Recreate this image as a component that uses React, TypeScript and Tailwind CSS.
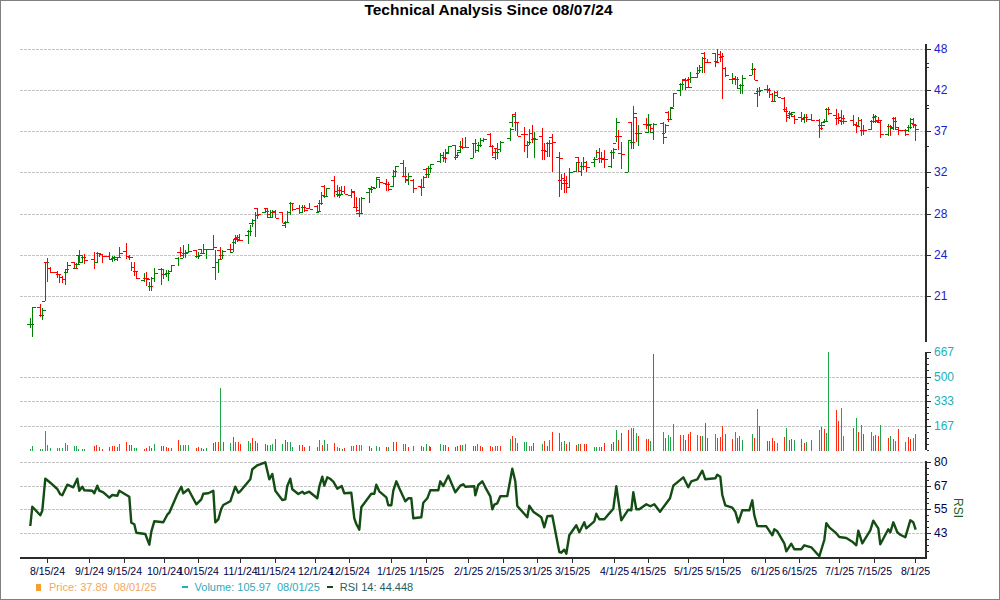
const A: number[][] = [
  [91,355,385,373,373],[97,320,412,373,321],
  [121,313,350,322,346],[127,325,361,346,330],[136,185,303,303,187],[142,175,245,187,205],[151,202,218,205,215],
  [172,212,235,215,221],[178,221,250,221,232],[187,228,250,232,236],[196,207,254,236,208],[202,187,218,215,195],
  [223,187,205,187,203],[229,190,205,203,192],[235,165,192,192,166],[238,150,190,166,187],[247,165,190,187,170],[253,163,193,170,181],
  [283,157,206,178,187],[292,157,185,187,158],[298,158,170,158,162],[307,162,188,162,169],
  [328,155,178,169,178],[337,168,185,178,170],[343,168,183,174,172],[352,170,182,178,170],[358,142,175,172,160],
  [379,130,178,152,168],[388,165,180,168,170],[394,187,214,170,202],[403,187,228,202,214],[409,212,236,214,233],
  [433,220,245,241,235],[439,217,258,235,236],[448,245,272,235,258],[454,230,272,258,235],[463,205,245,235,218],
  [484,205,254,206,222],[490,208,238,207,223],[499,210,232,223,218],[505,210,242,218,212],[514,195,215,212,196],
  [535,170,197,175,155],[541,140,170,155,165],[550,135,175,173,160],[556,150,175,160,155],[565,133,160,158,152],
  [589,150,175,150,168],[595,155,178,168,165],[604,148,163,148,160],[610,133,162,160,148],[619,148,177,148,147],
  [640,105,150,146,142],[646,150,240,200,187],[655,176,218,187,176],[661,142,180,150,165],[667,150,178,165,153],
  [691,133,160,146,147],[700,118,155,155,118],[706,105,133,127,112],[712,105,125,113,120],[718,103,123,118,120],
  [745,90,132,105,93],[751,75,108,93,70],[757,58,80,70,60],[766,35,110,60,45],[772,25,58,25,43],
  [796,28,40,35,34],[802,25,50,25,42],[811,30,55,50,35],[817,30,55,50,32],[826,30,55,37,55],
  [847,37,70,37,68],[856,62,85,75,65],[862,33,65,65,35],[871,7,45,35,10],[877,8,32,10,28],
  [898,14,42,25,37],[907,15,40,37,22],[913,15,35,20,30],[928,8,28,25,27],
  [952,15,35,17,33],[958,0,35,35,10],[965,-24,15,10,-15],[973,-45,-6,-42,-12],[980,-36,-9,-12,-36],
];
const B: number[][] = [
  [13,228,292,240,272],[22,255,290,272,285],[28,260,293,282,281],[34,258,285,271,272],[43,258,283,272,283],
  [64,268,295,285,272],[73,272,325,275,320],[79,290,335,320,330],[88,295,350,340,339],[94,290,343,340,295],
  [118,265,308,275,268],[124,258,278,265,262],[139,232,265,265,232],[148,236,265,238,245],
  [169,238,272,250,251],[175,245,272,252,268],[190,210,260,258,212],[196,198,230,228,198],
  [220,180,228,190,228],[226,200,250,228,240],[235,220,255,237,228],[250,238,278,240,265],
  [274,238,288,258,262],[280,228,262,262,230],[289,205,235,207,222],[295,198,235,222,205],[301,192,218,205,192],
  [331,160,188,182,165],[340,155,187,165,175],[346,148,188,170,155],[355,137,162,160,138],
  [376,135,180,136,165],[382,155,175,172,155],[391,123,158,150,140],[397,113,148,137,140],[406,112,145,140,142],
  [430,130,175,175,130],[436,118,158,130,150],[445,125,155,150,135],[451,113,140,135,120],[460,113,125,120,117],
  [481,100,140,102,137],[487,135,168,137,157],[496,148,180,172,155],[502,130,178,143,148],[511,122,155,148,127],
  [541,85,122,113,87],[547,42,80,65,48],[556,37,92,42,67],[562,65,108,67,108],
  [583,80,155,102,103],[592,122,175,135,125],[598,88,135,135,100],[607,75,130,100,115],[613,95,175,118,117],
  [637,85,180,108,150],[643,130,180,150,152],[652,125,170,152,130],[658,120,172,130,128],[667,103,215,110,127],
  [688,155,290,172,173],[694,222,270,240,250],[703,220,278,235,250],[709,228,278,240,262],[718,205,265,262,217],
  [739,185,215,213,187],[745,170,215,170,213],[754,185,228,213,197],[760,170,210,197,185],[769,183,215,197,202],
  [793,172,200,185,178],[799,150,175,178,155],[808,145,190,155,175],[814,155,190,175,176],[823,150,203,175,176],
  [844,150,205,197,155],[850,143,178,155,148],[859,55,125,128,67],[865,90,150,107,108],[874,127,207,160,162],
  [895,120,215,215,120],[904,67,148,67,125],[910,18,148,125,40],[919,50,125,52,100],[925,75,137,100,99],
  [949,55,88,72,73],[955,42,100,97,72],[961,75,97,75,85],[970,70,120,97,72],
];
// bars between the two traced crops, given in page pixels
const G: number[][] = [
  [663.3,121.7,144,123,137],[665.3,124,133,133,125],[668.3,111,122,112,119],[670.3,107,119,119,108],[673.3,93,107,107,93],
];
const C: number[][] = [
  [32,160,197,180,162],[38,148,180,162,148],[46,145,180,150,172],[55,140,172,150,172],[61,125,158,148,140],
  [82,110,143,140,120],[88,105,130,130,110],[97,80,130,110,83],[103,67,128,68,97],[112,88,100,95,96],
  [136,68,110,70,95],[142,57,95,93,72],[151,62,97,72,77],[157,68,208,80,113],[166,112,140,113,135],
  [187,130,162,147,146],[196,137,165,143,147],[202,140,178,147,175],[211,163,192,175,165],[217,135,193,165,145],
  [247,100,135,135,118],[253,115,150,118,150],[262,175,230,190,182],[268,172,197,182,180],
  [292,165,188,178,180],[298,175,205,178,192],[307,190,215,192,212],[313,183,215,212,195],[322,183,200,185,200],
  [343,200,245,203,243],[349,230,277,237,260],[358,242,268,255,252],[364,245,262,250,247],[373,255,282,257,267],
  [394,245,275,262,265],[403,252,278,267,262],[409,253,275,260,268],[424,253,273,268,269],
  [448,267,323,270,295],[454,280,300,285,286],[463,268,280,277,272],[469,235,275,272,238],[475,232,255,238,250],
  [499,238,285,255,265],[505,250,283,265,270],[514,240,285,260,265],[520,255,283,272,273],
  [550,255,288,270,282],[559,275,308,282,288],[565,262,288,285,270],[574,268,318,270,300],[580,285,315,300,301],
  [604,270,300,298,272],[610,252,280,272,258],[616,255,280,262,272],[625,262,280,270,271],[631,270,323,275,313],
  [655,283,318,313,288],[661,285,318,288,292],[670,262,300,295,273],[676,262,297,265,292],[685,295,315,298,300],
  [706,298,317,300,313],[715,285,305,300,292],[721,265,297,290,268],[730,265,295,280,285],[736,282,332,283,298],
];
const bars: number[][] = [
  ...A.map((b) => [Math.floor(b[0] / 3), 200 + b[1] / 3, 200 + b[2] / 3, 200 + b[3] / 3, 200 + b[4] / 3]),
  ...B.map((b) => [330 + Math.floor(b[0] / 3), 100 + b[1] / 3, 100 + b[2] / 3, 100 + b[3] / 3, 100 + b[4] / 3]),
  ...G.map((b) => [Math.floor(b[0]), b[1], b[2], b[3], b[4]]),
  ...C.map((b) => [670 + Math.floor(b[0] / 3), 30 + b[1] / 3, 30 + b[2] / 3, 30 + b[3] / 3, 30 + b[4] / 3]),
];

// [x in crop, bar top in crop, 1 = green]
const VA: number[][] = [
  [91,147,1],[97,138,1],[121,147,1],[127,147,1],[136,93,1],[142,136,1],[151,144,1],[172,144,1],[178,144,1],[187,143,1],[196,130,1],[202,136,1],
  [223,138,1],[229,138,1],[235,147,1],[247,148,1],[253,148,1],[283,138,0],[289,136,0],[298,142,0],[307,147,0],[328,140,0],[337,139,0],[343,139,0],[352,142,0],[358,133,1],
  [379,126,0],[388,134,0],[394,135,0],[403,144,1],[409,144,1],[433,147,0],[439,144,0],[448,138,1],[454,143,0],[463,133,1],[484,139,0],[490,139,0],[499,142,0],[505,144,0],[514,145,0],
  [535,120,0],[541,134,1],[550,135,1],[556,135,1],[565,135,1],[589,144,0],[595,142,0],[604,144,0],[610,146,0],[619,145,1],[640,129,0],[646,127,0],[655,127,0],[661,-36,1],[670,127,0],
  [691,130,1],[700,112,0],[706,127,1],[715,127,0],[721,132,0],[745,124,1],[751,130,1],[757,115,0],[766,124,0],[772,130,0],[796,131,0],[802,134,0],[811,135,1],[817,133,1],[826,118,0],
  [847,133,1],[856,121,0],[862,127,1],[871,127,1],[877,142,1],[898,136,0],[907,136,0],[913,142,0],[928,139,0],[952,142,0],[958,121,1],[967,135,0],[973,120,1],[982,133,1],
];
const VB: number[][] = [
  [13,130,0],[22,140,1],[28,145,0],[37,146,1],[43,145,0],[64,139,1],[70,139,1],[79,135,0],[88,135,1],[94,135,1],[118,139,0],[124,144,0],[139,139,1],[148,142,1],
  [169,142,0],[175,142,1],[190,125,0],[199,125,0],[220,133,1],[226,133,0],[235,142,0],[250,139,1],[274,139,0],[280,142,1],[289,133,1],[298,139,0],[301,142,0],
  [331,133,1],[340,134,1],[346,136,0],[355,140,0],[376,140,0],[382,139,0],[391,136,0],[397,136,1],[406,133,1],[430,139,0],[436,137,0],[442,133,1],[451,139,0],[457,142,0],
  [481,139,0],[487,142,0],[496,139,1],[502,138,1],[511,138,0],[541,118,1],[547,108,0],[556,115,1],[562,130,0],[583,126,1],[589,126,1],[598,138,1],[604,138,1],[610,130,0],
  [637,133,1],[643,122,0],[652,138,0],[658,120,1],[667,96,0],[688,98,0],[694,126,1],[703,124,1],[709,133,0],[718,126,0],[739,136,0],[745,133,1],[751,133,0],[763,132,0],[769,132,0],
  [793,141,1],[799,140,1],[808,140,1],[814,140,0],[823,129,0],[844,131,0],[850,126,0],[859,90,1],[865,120,0],[874,98,0],[895,90,0],[904,85,1],[910,85,0],[919,99,1],[925,109,0],
  [949,117,0],[955,118,0],[961,124,1],[970,-138,0],[1000,97,1],[1006,115,0],[1015,106,1],[1021,112,1],[1030,72,1],
];
const VC: number[][] = [
  [30,105,0],[39,105,1],[45,120,0],[55,102,0],[61,97,0],[82,105,1],[91,108,0],[97,108,1],[106,69,0],[112,115,0],[136,102,1],[142,114,0],[151,111,0],[157,78,0],[166,102,0],
  [187,118,0],[196,97,1],[202,114,0],[208,108,0],[217,120,1],[247,102,1],[253,115,0],[262,27,1],[268,78,0],[292,123,0],[298,123,0],[307,115,0],[313,123,0],[322,129,1],
  [343,111,0],[349,84,1],[358,120,0],[364,117,0],[373,120,1],[394,117,0],[403,129,0],[409,126,1],[424,120,1],[448,90,1],[454,81,0],[463,87,0],[469,99,1],[475,-144,1],
  [499,30,0],[505,63,0],[514,24,1],[520,108,1],[550,84,0],[559,54,1],[565,96,0],[574,75,1],[580,102,0],[604,96,1],[610,108,1],[616,105,0],[625,108,0],[631,75,1],
  [655,114,0],[661,108,1],[670,117,1],[676,123,1],[685,87,0],[706,126,1],[715,111,0],[721,117,0],[730,114,1],[736,102,1],
];
const vols: number[][] = [
  ...VA.map((v) => [Math.floor(v[0] / 3), 400 + v[1] / 3, v[2]]),
  ...VB.map((v) => [330 + Math.floor(v[0] / 3), 400 + v[1] / 3, v[2]]),
  ...VC.map((v) => [670 + Math.floor(v[0] / 3), 400 + v[1] / 3, v[2]]),
];

const RA = [91,378,97,320,121,346,127,332,136,236,142,241,151,248,160,256,172,267,181,283,187,286,202,254,220,262,232,236,238,272,247,260,253,271,277,272,283,280,292,257,298,272,310,277,328,293,337,285,352,287,358,272,388,290,394,368,403,373,409,398,436,402,448,434,454,395,463,364,490,367,502,344,508,338,532,283,544,260,550,280,565,268,589,313,604,298,610,281,625,280,640,272,646,367,655,358,664,326,670,315,691,304,706,260,715,278,721,274,751,238,757,208,772,196,796,187,808,238,817,222,826,272,847,300,856,298,862,258,871,236,877,268,895,282,907,275,913,281,928,275,952,295,958,260,967,230,973,257,982,232];
const RB = [0,236,10,245,22,266,35,258,43,280,64,278,73,355,79,372,88,389,94,322,124,281,133,281,139,254,148,274,169,292,175,316,184,316,190,272,199,244,208,265,226,304,235,295,244,295,250,355,274,352,280,308,292,295,301,271,325,271,331,244,340,258,355,227,376,277,391,257,400,253,406,260,433,259,436,286,445,255,457,244,466,262,481,289,487,328,493,314,502,310,511,289,532,288,547,206,556,244,562,318,592,352,598,317,610,335,634,352,643,382,652,349,667,347,688,456,694,458,703,449,709,461,718,406,739,376,748,397,763,367,769,385,793,364,799,341,808,358,823,358,850,326,859,259,874,361,895,329,904,331,910,277,919,328,928,328,949,313,961,319,973,313,990,335];
const RC = [0,295,10,257,40,232,55,262,64,244,82,238,97,212,106,238,136,235,142,224,151,230,157,285,166,316,187,323,196,335,205,367,217,331,238,331,247,301,253,346,262,378,289,379,307,406,313,388,322,394,343,430,349,454,364,431,373,448,394,448,403,436,424,442,448,469,463,420,469,370,478,382,496,397,508,411,529,414,547,425,559,436,565,392,577,430,601,391,610,362,619,376,625,385,631,433,655,388,661,397,670,367,682,397,691,404,706,412,721,361,730,367,737,389];
const toPts = (a: number[], x0: number) => {
  const out: string[] = [];
  for (let i = 0; i < a.length; i += 2) out.push(`${(x0 + a[i] / 3).toFixed(1)},${(400 + a[i + 1] / 3).toFixed(1)}`);
  return out.join(" ");
};
const rsi = `${toPts(RA, 0)} ${toPts(RB, 330)} ${toPts(RC, 670)}`;

const dates: [string, number][] = [
  ["8/15/24",47],["9/1/24",89],["9/15/24",124],["10/1/24",164],["10/15/24",198],["11/1/24",240],["11/15/24",275],["12/1/24",315],["12/15/24",349],
  ["1/1/25",391],["1/15/25",426],["2/1/25",468],["2/15/25",503],["3/1/25",537],["3/15/25",572],["4/1/25",614],["4/15/25",648],["5/1/25",688],["5/15/25",723],
  ["6/1/25",765],["6/15/25",799],["7/1/25",839],["7/15/25",874],["8/1/25",915],
];
const priceAxis: [string, number][] = [["48",49],["42",90],["37",131],["32",172],["28",214],["24",255],["21",296]];
const volAxis: [string, number][] = [["667",352],["500",377],["333",401],["167",426]];
const rsiAxis: [string, number][] = [["80",462],["67",486],["55",509],["43",533]];
const priceMinor = [63,67,105,108,146,187];
const volMinor = [358,364,370,383,389,395,407,413,419,432,438,444,450];
const rsiMinor = [468,474,480,492,498,503,515,521,527,539,545,551];
const grid = [49,90,131,172,214,255,296,377,401,426,462,486,509,533];
const AXIS = "#2b2b2b";

export default function App() {
  return (
    <div className="w-[1000px] h-[600px] box-border border border-[#808080] bg-white flex flex-col overflow-hidden font-['Liberation_Sans',Arial,sans-serif]">
      <div className="h-[19px] pr-[23px] text-center text-[15.5px] leading-[18px] font-bold text-black">Technical Analysis Since 08/07/24</div>
      <svg className="block shrink-0" width="998" height="556" viewBox="1 20 998 556" fontFamily="'Liberation Sans', Arial, sans-serif">
        <g shapeRendering="crispEdges">
          {grid.map((y) => (
            <line key={y} x1="20" x2="925" y1={y + 0.5} y2={y + 0.5} stroke="#c4c4c4" strokeDasharray="3 1" />
          ))}
          {vols.map((v, i) => (
            <rect key={i} x={v[0]} y={v[1]} width="1" height={451 - v[1]} fill={v[2] ? "#1fa64a" : "#ff2a10"} />
          ))}
          {bars.map((b, i) => {
            const color = b[4] > b[3] ? "#ff0000" : "#008000";
            return (
              <g key={i} fill={color}>
                <rect x={b[0]} y={b[1]} width="1" height={b[2] - b[1]} />
                <rect x={b[0] - 3} y={Math.round(b[3])} width="3" height="1" />
                <rect x={b[0] + 1} y={Math.round(b[4])} width="3" height="1" />
              </g>
            );
          })}
          <rect x="20" y="557" width="906" height="2" fill={AXIS} />
          <rect x="925" y="44" width="2" height="298" fill={AXIS} />
          <rect x="925" y="352" width="2" height="98" fill={AXIS} />
          <rect x="925" y="461" width="2" height="98" fill={AXIS} />
          {[...priceAxis, ...volAxis, ...rsiAxis].map(([l, y]) => (
            <rect key={l} x="927" y={y} width="4" height="1" fill={AXIS} />
          ))}
          {[...priceMinor, ...volMinor, ...rsiMinor].map((y) => (
            <rect key={y} x="927" y={y} width="2" height="1" fill={AXIS} />
          ))}
          {dates.map(([l, x]) => (
            <rect key={l} x={x} y="559" width="1" height="4" fill={AXIS} />
          ))}
        </g>
        <polyline points={rsi} fill="none" stroke="#134d13" strokeWidth="2.4" strokeLinejoin="round" />
        <g fontSize="12">
          {priceAxis.map(([l, y]) => (
            <text key={l} x="934" y={y + 4} fill="#2020c8">{l}</text>
          ))}
          {volAxis.map(([l, y]) => (
            <text key={l} x="934" y={y + 4} fill="#20b0b8">{l}</text>
          ))}
          {rsiAxis.map(([l, y]) => (
            <text key={l} x="934" y={y + 4} fill="#000050">{l}</text>
          ))}
        </g>
        <text x="957" y="508" fontSize="12" fill="#1f5f1f" textAnchor="middle" transform="rotate(90 957 508)" dominantBaseline="middle">RSI</text>
        <g fontSize="10.5" fill="#000040" textAnchor="middle">
          {dates.map(([l, x]) => (
            <text key={l} x={x + 0.5} y="575">{l}</text>
          ))}
        </g>
      </svg>
      <div className="flex items-center h-[22px] text-[11px] leading-none">
        <span className="ml-[35px] w-[5px] h-[7px] bg-[#f4a030]" />
        <span className="ml-[8px] text-[#f4a860]">Price: 37.89</span>
        <span className="ml-[6px] text-[#f4a860]">08/01/25</span>
        <span className="ml-[25px] w-[6px] h-[2px] bg-[#20b0b8]" />
        <span className="ml-[7px] text-[#30a8bc]">Volume: 105.97</span>
        <span className="ml-[6px] text-[#30a8bc]">08/01/25</span>
        <span className="ml-[7px] w-[6px] h-[2px] bg-[#134d13]" />
        <span className="ml-[7px] text-[#1f6060]">RSI 14: 44.448</span>
      </div>
    </div>
  );
}
